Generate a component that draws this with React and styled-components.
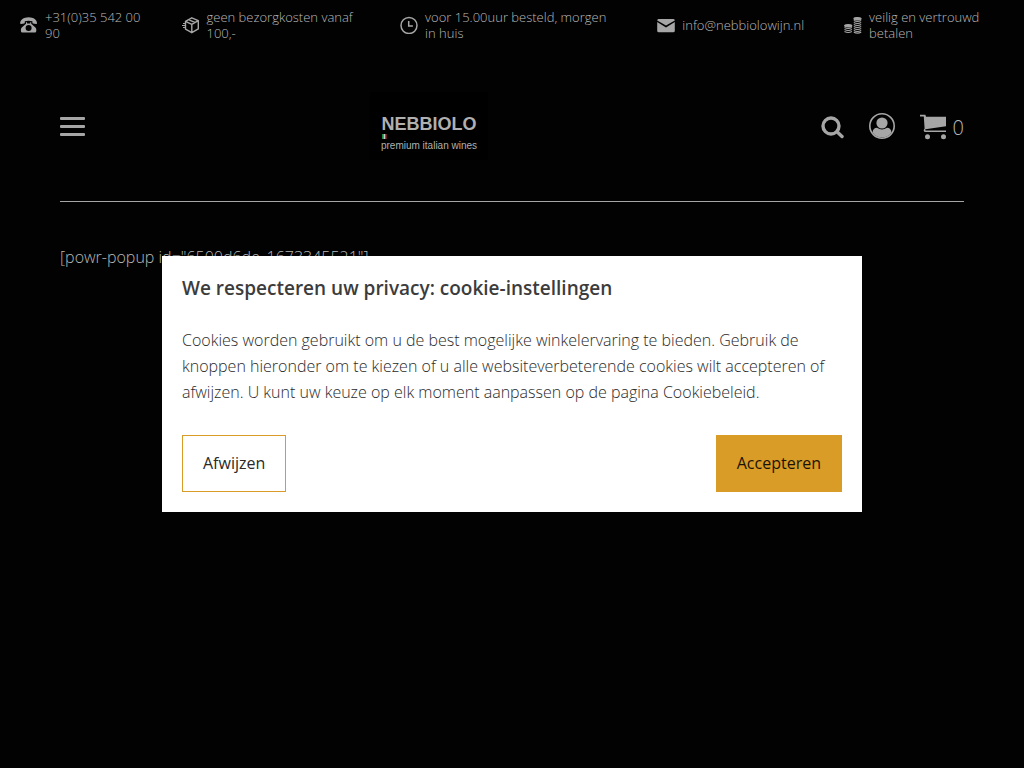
import styled, { createGlobalStyle } from "styled-components";

const ink = "#a6a6a6";
const textInk = "#b8b8b8";
const gold = "#d99c26";

const GlobalStyle = createGlobalStyle`
  * {
    box-sizing: border-box;
  }
  body {
    margin: 0;
    background: #020202;
    color: ${textInk};
    font-family: "Open Sans", "Noto Sans", sans-serif;
    font-size: 16px;
    font-weight: 300;
  }
  a {
    color: inherit;
    text-decoration: none;
  }
  button {
    font-family: inherit;
    cursor: pointer;
  }
`;

const UspBar = styled.ul`
  display: flex;
  align-items: center;
  min-height: 50px;
  margin: 0;
  padding: 0;
  list-style: none;
`;

const Usp = styled.li`
  display: flex;
  align-items: center;
  gap: 7px;
  padding: 0 20px;
  font-size: 13px;
  line-height: 16px;

  svg {
    flex: none;
  }
`;

const Header = styled.header`
  display: flex;
  align-items: center;
  margin: 0 60px;
  padding: 42px 0 41px;
  border-bottom: 1px solid ${ink};
`;

const HeaderLeft = styled.div`
  flex: 13 1 0;
  display: flex;
`;

const HeaderRight = styled.div`
  flex: 20 1 0;
  display: flex;
  justify-content: flex-end;
  align-items: center;
  gap: 25px;
`;

const MenuButton = styled.button`
  display: flex;
  flex-direction: column;
  gap: 5px;
  width: 25px;
  padding: 0;
  border: 0;
  background: none;

  span {
    height: 3px;
    border-radius: 1px;
    background: ${ink};
  }
`;

const IconButton = styled.button`
  display: flex;
  padding: 0;
  border: 0;
  background: none;
`;

const Cart = styled.a`
  display: flex;
  align-items: center;
  gap: 6px;
  font-size: 20px;
  line-height: 28px;

  span {
    padding-top: 4px;
  }
`;

const Logo = styled.a`
  display: flex;
  width: 118px;
  background: #000;
`;

const Main = styled.main`
  padding: 42px 60px;

  p {
    margin: 0;
    line-height: 26px;
  }
`;

const Overlay = styled.div`
  position: fixed;
  inset: 0;
  display: flex;
  align-items: center;
  justify-content: center;
`;

const Dialog = styled.section`
  width: 100%;
  max-width: 700px;
  padding: 20px;
  background: #fff;
  color: #2a2a2a;

  h2 {
    margin: 0 0 27px;
    color: #3c3c3c;
    font-size: 19px;
    font-weight: 600;
    line-height: 24px;
  }
  p {
    margin: 0 0 30px;
    line-height: 26px;
  }
`;

const Actions = styled.div`
  display: flex;
  justify-content: space-between;
`;

const Button = styled.button`
  height: 57px;
  padding: 0 20px 2px;
  border: 1px solid ${gold};
  background: ${({ $primary }) => ($primary ? gold : "#fff")};
  color: ${({ $primary }) => ($primary ? "#1a1408" : "#2a2a2a")};
  font-size: 16px;
  font-weight: 400;
`;

const PhoneIcon = () => (
  <svg width="18" height="18" viewBox="0 0 18 18" fill={ink} aria-hidden="true">
    <path d="M.2 7.500C0 4 3.600 1.200 8.600 1.200S17.200 4 17 7.500q-.2.500-.8.400l-3.200-.5q-.6-.1-.6-.8V5.200q-3.800-1-7.600 0v1.400q0 .7-.6.8L1 7.900q-.6.100-.8-.4z" />
    <path fillRule="evenodd" d="M6 6.200h1v1.200h3.200V6.200h1v1.600l4.200 3.700q.9.900.9 2V15q0 1.500-1.500 1.500H2.400Q.9 16.500.9 15v-1.500q0-1.100.9-2L6 7.800zM8.600 9a3 3 0 1 0 0 6 3 3 0 0 0 0-6z" />
  </svg>
);

const BoxIcon = () => (
  <svg width="18" height="18" viewBox="0 0 18 18" fill="none" stroke={ink} strokeWidth="1.400" strokeLinejoin="round" aria-hidden="true">
    <path d="M3.500 5.300 9.800 1.800l6.500 2.800v8.300l-6.500 3.800-6.300-3.500zM3.500 5.300l6.300 3 6.500-3.700M9.800 8.300v8.400M6.600 3.600l6.600 3" />
    <path d="M1 7.500h2.500M0 9.500h3.500M1 11.500h2.500" strokeWidth="1" />
  </svg>
);

const ClockIcon = () => (
  <svg width="18" height="18" viewBox="0 0 18 18" fill="none" stroke={ink} strokeWidth="1.500" aria-hidden="true">
    <circle cx="9" cy="9.500" r="8" />
    <path d="M8.700 5v5h4.200" />
  </svg>
);

const MailIcon = () => (
  <svg width="18" height="18" viewBox="0 0 18 18" fill={ink} aria-hidden="true">
    <path d="M1.500 3h15q1.300.1 1.300 1.400L9 9.600.2 4.400Q.2 3.100 1.500 3z" />
    <path d="M.2 6 9 11.400 17.800 6v8.800q0 1.500-1.500 1.500H1.700q-1.500 0-1.500-1.500z" />
  </svg>
);

const CoinsIcon = () => (
  <svg width="18" height="18" viewBox="0 0 18 18" fill="none" stroke={ink} strokeWidth="1.100" aria-hidden="true">
    <ellipse cx="4.200" cy="9.700" rx="3.600" ry="1.200" fill={ink} />
    <path d="M.5 11.500q3.700 2 7.400 0M.5 13.500q3.700 2 7.400 0M.5 15.500q3.700 2 7.400 0" />
    <ellipse cx="13.500" cy="2.700" rx="3.600" ry="1.200" fill={ink} />
    <path d="M9.800 4.500q3.700 2 7.400 0M9.800 6.500q3.700 2 7.400 0M9.800 8.500q3.700 2 7.400 0M9.800 10.500q3.700 2 7.400 0M9.800 12.500q3.700 2 7.400 0M9.800 14.500q3.700 2 7.400 0M9.800 16.300q3.700 1.600 7.400 0" />
  </svg>
);

const SearchIcon = () => (
  <svg width="24" height="26" viewBox="0 0 24 26" fill="none" stroke={ink} aria-hidden="true">
    <circle cx="11" cy="13" r="8" strokeWidth="3.400" />
    <path d="m17 18.800 5 4.700" strokeWidth="3.400" strokeLinecap="round" />
  </svg>
);

const UserIcon = () => (
  <svg width="26" height="26" viewBox="0 0 26 26" fill={ink} aria-hidden="true">
    <circle cx="13" cy="13" r="12.200" fill="none" stroke={ink} strokeWidth="1.600" />
    <circle cx="13" cy="10" r="5.600" />
    <path d="M3.500 19.500Q4 15 8 14.800q5 3.400 10 0 4 .2 4.500 4.700A11.600 11.600 0 0 1 3.500 19.500z" />
  </svg>
);

const CartIcon = () => (
  <svg width="27" height="28" viewBox="0 0 27 28" fill={ink} aria-hidden="true">
    <path d="M0 2.800h5.400L6 4.700h20v9.600L5.400 17.200q-.6 1 .3 1.300H26V20H5q-1.300-.2-1.300-1.500 0-1.200.9-1.800L3.800 4.500H0z" />
    <circle cx="7.500" cy="24.800" r="2.500" />
    <circle cx="23.500" cy="24.800" r="2.500" />
  </svg>
);

const LogoArt = () => (
  <svg width="118" height="68" viewBox="0 0 118 68" fill="#b0b0b0" aria-hidden="true">
    <text x="59" y="38" textAnchor="middle" fontFamily="'Liberation Sans', sans-serif" fontSize="18" fontWeight="700">
      NEBBIOLO
    </text>
    <path d="M12 42h1.500v5H12z" fill="#168a43" />
    <path d="M13.500 42H15v5h-1.500z" fill="#ccc" />
    <path d="M15 42h1.500v5H15z" fill="#c33" />
    <text x="59" y="57" textAnchor="middle" fontFamily="'Liberation Sans', sans-serif" fontSize="10" fontWeight="400">
      premium italian wines
    </text>
  </svg>
);

const App = () => {
  return (
    <>
      <GlobalStyle />
      <UspBar>
        <Usp>
          <PhoneIcon />
          <span>+31(0)35 542 00 90</span>
        </Usp>
        <Usp>
          <BoxIcon />
          <span>geen bezorgkosten vanaf 100,-</span>
        </Usp>
        <Usp>
          <ClockIcon />
          <span>voor 15.00uur besteld, morgen in huis</span>
        </Usp>
        <Usp>
          <MailIcon />
          <a href="mailto:info@nebbiolowijn.nl">info@nebbiolowijn.nl</a>
        </Usp>
        <Usp>
          <CoinsIcon />
          <span>veilig en vertrouwd betalen</span>
        </Usp>
      </UspBar>
      <Header>
        <HeaderLeft>
          <MenuButton aria-label="Menu">
            <span />
            <span />
            <span />
          </MenuButton>
        </HeaderLeft>
        <Logo href="#" aria-label="Nebbiolo">
          <LogoArt />
        </Logo>
        <HeaderRight>
          <IconButton aria-label="Zoeken">
            <SearchIcon />
          </IconButton>
          <IconButton aria-label="Account">
            <UserIcon />
          </IconButton>
          <Cart href="#" aria-label="Winkelwagen">
            <CartIcon />
            <span>0</span>
          </Cart>
        </HeaderRight>
      </Header>
      <Main>
        <p>[powr-popup id="6500d6de_1673345521"]</p>
      </Main>
      <Overlay>
        <Dialog role="dialog" aria-labelledby="cookie-title">
          <h2 id="cookie-title">We respecteren uw privacy: cookie-instellingen</h2>
          <p>
            Cookies worden gebruikt om u de best mogelijke winkelervaring te bieden. Gebruik de knoppen hieronder om te
            kiezen of u alle websiteverbeterende cookies wilt accepteren of afwijzen. U kunt uw keuze op elk moment
            aanpassen op de pagina Cookiebeleid.
          </p>
          <Actions>
            <Button>Afwijzen</Button>
            <Button $primary>Accepteren</Button>
          </Actions>
        </Dialog>
      </Overlay>
    </>
  );
};

export default App;
